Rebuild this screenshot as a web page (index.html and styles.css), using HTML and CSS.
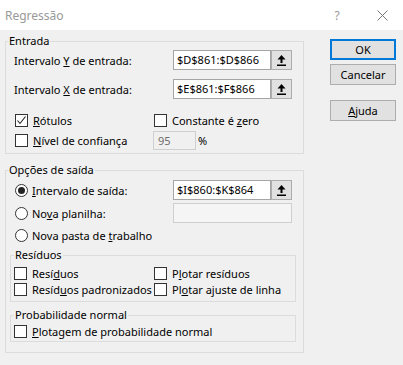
FILE: index.html
```html
<!DOCTYPE html>
<html lang="pt-BR">
<head>
  <meta charset="utf-8" />
  <title>Regressão</title>
  <link rel="stylesheet" href="styles.css">
</head>
<body>
  <div class="dialog">
    <!-- title bar -->
    <header class="titlebar">
      <span class="title">Regressão</span>
      <span class="help">?</span>
      <svg class="close" width="11" height="11" viewBox="0 0 11 11"><path d="M0.5 0.5L10.5 10.5M10.5 0.5L0.5 10.5"/></svg>
    </header>

    <div class="content">
      <div class="groups">
        <!-- Entrada -->
        <fieldset class="group">
          <legend>Entrada</legend>
          <div class="group-body entrada">
            <div class="range-row">
              <span>Intervalo <u>Y</u> de entrada:</span>
              <div class="ref">
                <span class="ref-box">$D$861:$D$866</span>
                <span class="ref-btn"><svg width="9" height="11" viewBox="0 0 9 11"><path d="M4.5 0L0.5 4.5H8.5Z"/><rect x="3.5" y="4" width="2" height="4"/><rect x="0" y="9.5" width="9" height="1.5"/></svg></span>
              </div>
            </div>
            <div class="range-row gap">
              <span>Intervalo <u>X</u> de entrada:</span>
              <div class="ref">
                <span class="ref-box">$E$861:$F$866</span>
                <span class="ref-btn"><svg width="9" height="11" viewBox="0 0 9 11"><path d="M4.5 0L0.5 4.5H8.5Z"/><rect x="3.5" y="4" width="2" height="4"/><rect x="0" y="9.5" width="9" height="1.5"/></svg></span>
              </div>
            </div>
            <div class="check-grid">
              <label class="opt"><span class="box checked"><svg width="11" height="11" viewBox="0 0 11 11"><path d="M1.5 5.5L4 8.5L9.5 1.5"/></svg></span><span><u>R</u>ótulos</span></label>
              <label class="opt shift"><span class="box"></span><span>Constante é <u>z</u>ero</span></label>
              <label class="opt"><span class="box"></span><span><u>N</u>ível de confiança</span></label>
              <div class="confidence"><span class="num">95</span><span>%</span></div>
            </div>
          </div>
        </fieldset>

        <!-- Opções de saída -->
        <fieldset class="group output">
          <legend>Opções de saída</legend>
          <div class="group-body saida">
            <div class="radio-row first">
              <label class="opt"><span class="radio on"></span><span><u>I</u>ntervalo de saída:</span></label>
              <div class="ref">
                <span class="ref-box">$I$860:$K$864</span>
                <span class="ref-btn"><svg width="9" height="11" viewBox="0 0 9 11"><path d="M4.5 0L0.5 4.5H8.5Z"/><rect x="3.5" y="4" width="2" height="4"/><rect x="0" y="9.5" width="9" height="1.5"/></svg></span>
              </div>
            </div>
            <div class="radio-row second">
              <label class="opt"><span class="radio"></span><span>No<u>v</u>a planilha:</span></label>
              <span class="ref-box disabled"></span>
            </div>
            <div class="radio-row third">
              <label class="opt"><span class="radio"></span><span>Nova pasta de <u>t</u>rabalho</span></label>
            </div>

            <fieldset class="group sub residuos">
              <legend>Resíduos</legend>
              <div class="sub-grid">
                <label class="opt"><span class="box"></span><span>Resí<u>d</u>uos</span></label>
                <label class="opt"><span class="box"></span><span>P<u>l</u>otar resíduos</span></label>
                <label class="opt"><span class="box"></span><span>Resíd<u>u</u>os padronizados</span></label>
                <label class="opt"><span class="box"></span><span>Pl<u>o</u>tar ajuste de linha</span></label>
              </div>
            </fieldset>

            <fieldset class="group sub prob">
              <legend>Probabilidade normal</legend>
              <div class="sub-grid single">
                <label class="opt"><span class="box"></span><span><u>P</u>lotagem de probabilidade normal</span></label>
              </div>
            </fieldset>
          </div>
        </fieldset>
      </div>

      <!-- dialog buttons -->
      <div class="actions">
        <button class="btn default">OK</button>
        <button class="btn">Cancelar</button>
        <button class="btn help-btn"><u>A</u>juda</button>
      </div>
    </div>
  </div>
</body>
</html>
```

FILE: styles.css
```css
/* reset */
*,*::before,*::after{box-sizing:border-box;margin:0;padding:0;}

body{
  font-family:"Noto Sans","Open Sans",sans-serif;
  font-size:11px;
  color:#000;
  background:#f0f0f0;
}

u{text-underline-offset:1px;}

.dialog{width:403px;height:365px;background:#f0f0f0;}

/* title bar */
.titlebar{
  height:30px;
  background:#fff;
  display:flex;
  align-items:center;
  padding-left:5px;
}
.title{flex:1;color:#999;font-size:12px;}
.help{width:20px;text-align:center;margin-right:30px;color:#999;font-size:12px;}
.close{margin-right:15px;}
.close path{stroke:#777;stroke-width:1;fill:none;}

/* body */
.content{display:flex;gap:26px;padding:3px 0 0 5px;}
.groups{width:299px;}

fieldset.group{border:1px solid #dcdcdc;min-width:0;}
fieldset.group legend{margin-left:2px;padding:0 1px;line-height:16px;}

.group-body.entrada{padding:1px 0 3px 8px;}

.range-row{
  display:grid;
  grid-template-columns:159px 119px;
  align-items:center;
  height:20px;
}
.range-row.gap{margin-top:9px;}

.ref{display:flex;height:20px;}
.ref-box{
  width:98px;
  height:20px;
  border:1px solid #a5a5a5;
  background:#fff;
  padding-left:3px;
  line-height:18px;
}
.ref-box.disabled{width:119px;border-color:#cfcfcf;background:#f5f5f5;}
.ref-btn{
  width:21px;
  border:1px solid #adadad;
  background:#e1e1e1;
  display:flex;
  align-items:center;
  justify-content:center;
}
.ref-btn svg{fill:#000;}

/* checkbox / radio */
.opt{display:flex;align-items:center;gap:5px;white-space:nowrap;}
.box{
  width:13px;
  height:13px;
  border:1px solid #333;
  background:#fff;
  flex:none;
  display:flex;
  align-items:center;
  justify-content:center;
}
.box svg path{stroke:#222;stroke-width:1.1;fill:none;}
.radio{
  width:13px;
  height:13px;
  border:1px solid #333;
  border-radius:50%;
  background:#fff;
  flex:none;
  margin-left:5px;
  display:flex;
  align-items:center;
  justify-content:center;
}
.radio-row .opt{gap:4px;}
.radio.on::after{content:"";width:7px;height:7px;border-radius:50%;background:#222;}

.check-grid{
  display:grid;
  grid-template-columns:139px auto;
  grid-auto-rows:20px;
  align-items:center;
  margin-top:11px;
}
.check-grid .opt .box{margin-left:1px;}
.confidence{display:flex;align-items:center;gap:2px;}
.num{
  width:43px;
  height:19px;
  border:1px solid #cfcfcf;
  background:#f0f0f0;
  color:#6d6d6d;
  padding-left:4px;
  line-height:17px;
}

/* output group */
.group.output{margin-top:8px;}
.group-body.saida{padding:0 7px 10px 4px;}

.radio-row{
  display:grid;
  grid-template-columns:163px 119px;
  align-items:center;
  height:20px;
}
.radio-row.first{margin-top:2px;}
.radio-row.second{margin-top:3px;}
.radio-row.third{margin-top:2px;}

fieldset.group.sub legend{margin-left:3px;}
.group.residuos{margin-top:2px;}
.group.prob{margin-top:5px;}

.sub-grid{
  display:grid;
  grid-template-columns:140px auto;
  grid-auto-rows:16px;
  align-items:center;
  padding:2px 0 4px 3px;
}
.sub-grid.single{grid-template-columns:auto;padding:0 0 2px 3px;}

/* buttons */
.actions{display:flex;flex-direction:column;width:66px;padding-top:6px;}
.btn{
  height:21px;
  border:1px solid #adadad;
  background:#e1e1e1;
  font:inherit;
  color:#000;
}
.btn.default{border:2px solid #0078d7;}
.btn + .btn{margin-top:4px;}
.btn.help-btn{margin-top:15px;}
```
